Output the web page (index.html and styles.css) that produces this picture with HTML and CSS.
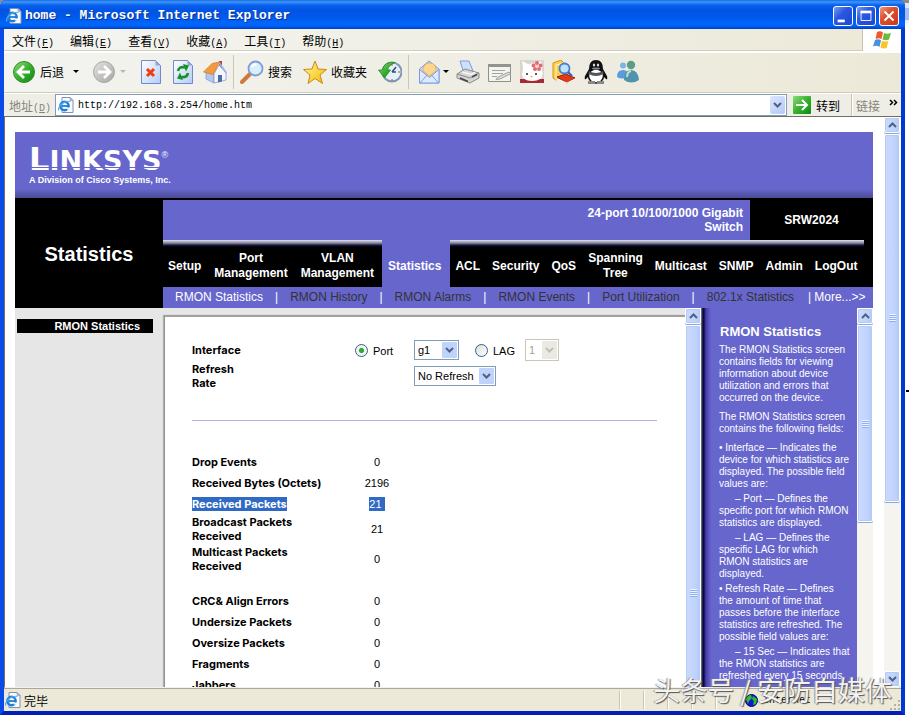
FILE: index.html
```html
<!DOCTYPE html>
<html lang="zh-CN">
<head>
<meta charset="utf-8">
<meta name="viewport" content="width=device-width, initial-scale=1">
<title>home - Microsoft Internet Explorer</title>
<link rel="stylesheet" href="styles.css">
</head>
<body>

<svg class="sprite" width="0" height="0" aria-hidden="true">
  <symbol id="ie" viewBox="0 0 16 16">
    <path d="M4 .5h8l3 3v12H4z" fill="#fdfdff" stroke="#7f8fb5"/>
    <path d="M12 .5v3h3z" fill="#b9c6e6" stroke="#7f8fb5" stroke-width=".6"/>
    <circle cx="6.5" cy="9" r="4.2" fill="none" stroke="#1c7fd8" stroke-width="2.4"/>
    <path d="M3.5 9h7" stroke="#1c7fd8" stroke-width="1.8"/>
    <path d="M8 10.4h4v2H9z" fill="#fdfdff"/>
    <path d="M1 13.500C-1 10 6 3 12.500 4.500" fill="none" stroke="#4fb0f2" stroke-width="1.200"/>
  </symbol>
  <symbol id="up" viewBox="0 0 9 6"><path d="M1 5l3.500-3.500L8 5" fill="none" stroke="#4d6185" stroke-width="2"/></symbol>
  <symbol id="down" viewBox="0 0 9 6"><path d="M1 1l3.500 3.500L8 1" fill="none" stroke="#4d6185" stroke-width="2"/></symbol>
  <linearGradient id="green" x1="0" y1="0" x2="1" y2="1"><stop offset="0" stop-color="#8fdc7c"/><stop offset=".5" stop-color="#38b02c"/><stop offset="1" stop-color="#0c8a10"/></linearGradient>
  <linearGradient id="grey" x1="0" y1="0" x2="1" y2="1"><stop offset="0" stop-color="#e4e4e2"/><stop offset="1" stop-color="#a4a4a2"/></linearGradient>
  <linearGradient id="paper" x1="0" y1="0" x2="1" y2="1"><stop offset="0" stop-color="#ffffff"/><stop offset="1" stop-color="#b4ccf6"/></linearGradient>
  <linearGradient id="gold" x1="0" y1="0" x2="1" y2="1"><stop offset="0" stop-color="#fff7a0"/><stop offset="1" stop-color="#f5b800"/></linearGradient>
</svg>

<div class="window">

  <header class="titlebar">
    <svg class="ie-icon" viewBox="0 0 16 16"><use href="#ie"/></svg>
    <h1>home - Microsoft Internet Explorer</h1>
    <button class="win-btn" aria-label="Minimize"><svg viewBox="0 0 20 20"><path d="M4 14h8v3H4z" fill="#fff"/></svg></button>
    <button class="win-btn" aria-label="Maximize"><svg viewBox="0 0 20 20"><path d="M4.500 5h11v10h-11z" fill="none" stroke="#fff"/><path d="M4 4h12v3H4z" fill="#fff"/></svg></button>
    <button class="win-btn close" aria-label="Close"><svg viewBox="0 0 20 20"><path d="M5 5l10 10M15 5L5 15" stroke="#fff" stroke-width="2.200"/></svg></button>
  </header>

  <nav class="menubar">
    <a href="#">文件<span>(<u>F</u>)</span></a>
    <a href="#">编辑<span>(<u>E</u>)</span></a>
    <a href="#">查看<span>(<u>V</u>)</span></a>
    <a href="#">收藏<span>(<u>A</u>)</span></a>
    <a href="#">工具<span>(<u>T</u>)</span></a>
    <a href="#">帮助<span>(<u>H</u>)</span></a>
    <div class="flag">
      <svg viewBox="0 0 20 18">
        <path d="M5 1q3-1.500 6 .5L9.500 8q-3-1.500-6 0z" fill="#ee5a2c"/>
        <path d="M12 2q3 1.500 7 0l-2 6.500q-3 1.500-6.500 0z" fill="#6dba3c"/>
        <path d="M3 9q3-1.500 6 .2L7.500 16q-3-2-6.500-.5z" fill="#4a8fe0"/>
        <path d="M10 9.700q3 1.300 6.500.2L14.500 17q-3 1-6-.5z" fill="#fcc428"/>
      </svg>
    </div>
  </nav>

  <div class="toolbar">
    <button class="tool has-text">
      <svg viewBox="0 0 24 24"><circle cx="12" cy="12" r="10.500" fill="url(#green)" stroke="#2f8a2a"/><path d="M12 6l-6 6 6 6M6.500 12H18" fill="none" stroke="#fff" stroke-width="2.800"/></svg>
      后退<i class="arrow"></i>
    </button>
    <button class="tool menu-tool" aria-label="Forward" disabled>
      <svg viewBox="0 0 24 24"><circle cx="12" cy="12" r="10.500" fill="url(#grey)" stroke="#a8a8a6"/><path d="M12 6l6 6-6 6M17.500 12H6" fill="none" stroke="#fff" stroke-width="2.800"/></svg><i class="arrow"></i>
    </button>
    <button class="tool" aria-label="Stop">
      <svg viewBox="0 0 24 24"><path d="M2.500.5h14l5 5v18h-19z" fill="url(#paper)" stroke="#6f8cc8"/><path d="M16.500.5v5h5z" fill="#8aa8e0"/><path d="M8 9l7 7M15 9l-7 7" stroke="#f03c10" stroke-width="3"/></svg>
    </button>
    <button class="tool" aria-label="Refresh">
      <svg viewBox="0 0 24 24"><path d="M2.500.5h14l5 5v18h-19z" fill="url(#paper)" stroke="#6f8cc8"/><path d="M16.500.5v5h5z" fill="#8aa8e0"/><path d="M7 11q1-5 7-3.500M17 13q-1 5-7 4" fill="none" stroke="#17922a" stroke-width="2.600"/><path d="M12 4l6 1.500-3 6zM12 20l-6-1.500 3-6z" fill="#17922a"/></svg>
    </button>
    <button class="tool" aria-label="Home">
      <svg viewBox="0 0 24 24"><path d="M16 1h3v7h-3z" fill="#c0402c"/><path d="M3 12l8 2v9l-8-4z" fill="#b4c8ee" stroke="#7890c8" stroke-width=".7"/><path d="M11 14l5-9 7 8v7l-12 3z" fill="#f3f6ff" stroke="#7890c8" stroke-width=".7"/><path d="M.5 12L9 3.500 16.500 2 10 14.500z" fill="#f59a3c" stroke="#d07820" stroke-width=".7"/><path d="M16 2.500l7.500 10.500" stroke="#9cb2e0" stroke-width="1.500"/><path d="M15 15h4v6.500l-4 1z" fill="#4a6cae"/></svg>
    </button>
    <span class="sep"></span>
    <button class="tool has-text">
      <svg viewBox="0 0 24 24"><path d="M10 14l-8 8" stroke="#cf7a3a" stroke-width="4" stroke-linecap="round"/><circle cx="15.500" cy="8.500" r="7" fill="#d8f0fd" stroke="#7f9cd8" stroke-width="1.800"/><path d="M11.500 7q2-3 5-2.500" fill="none" stroke="#fff" stroke-width="2"/></svg>
      搜索
    </button>
    <button class="tool has-text">
      <svg viewBox="0 0 24 24"><path d="M12 1l3 8 8.500.5-6.500 5.500 2.500 8.500L12 18.500 5 23.500l2-8.500L.5 9.500 9 9z" fill="url(#gold)" stroke="#c98a10"/></svg>
      收藏夹
    </button>
    <button class="tool" aria-label="History">
      <svg viewBox="0 0 24 24"><circle cx="14" cy="12" r="9.500" fill="#e3f1fc" stroke="#8296b0" stroke-width="2"/><path d="M14 12l4-5M14 12h4" stroke="#35506e" stroke-width="1.500"/><path d="M20 12h2M14 4v2M14 19v2" stroke="#d04020"/><path d="M17 2.500Q6 1 4.500 10H.5l6 8 6-8H9.500q1-5 7.500-7.500z" fill="url(#green)" stroke="#228c26" stroke-width=".8"/></svg>
    </button>
    <span class="sep"></span>
    <button class="tool mail" aria-label="Mail">
      <svg viewBox="0 0 24 24"><path d="M1.500 9L11 1l10 8v14h-19.500z" fill="#c4d8fa" stroke="#7b9ae0"/><path d="M5 11q0-8 7-8 6 0 6 8l-6.500 5z" fill="#fbd68c" stroke="#e0a050" stroke-width=".7"/><path d="M1.500 9.500l10 8 9.500-8V23H1.500z" fill="#dfeafd" stroke="#7b9ae0"/><path d="M2 23l7-8M20.500 23l-7-8" stroke="#7b9ae0"/></svg><i class="arrow"></i>
    </button>
    <button class="tool" aria-label="Print">
      <svg viewBox="0 0 24 24"><path d="M4 1h9l4 10-9 2z" fill="#cfe0fd" stroke="#7f9be0"/><path d="M1 14l8-5 14 4v5l-9 5-13-5z" fill="#d4d4d4" stroke="#8b8b8b"/><path d="M1 14l13 4 9-5" fill="none" stroke="#8b8b8b"/><path d="M4 18l8 3.500M16 17l5-2.500" stroke="#444" stroke-width="1.500"/><path d="M6 12l9 2.500 4-2" fill="none" stroke="#f6f6f6" stroke-width="1.500"/></svg>
    </button>
    <button class="tool" aria-label="Edit">
      <svg viewBox="0 0 24 24"><path d="M.5 4.500h22v17H.5z" fill="#f3f3ef" stroke="#8f8f8c"/><path d="M0 4h23v3H0z" fill="#94948f"/><path d="M4 10.500h13M4 13.500h11M4 16.500h5" stroke="#a5a5a0"/><path d="M10 17l11-5 2 1.500L12 19l-4 .5z" fill="#dcdcd8" stroke="#8f8f8c" stroke-width=".8"/></svg>
    </button>
    <button class="tool" aria-label="Hello Kitty">
      <svg viewBox="0 0 24 24"><path d="M0 0h24v23H0z" fill="#d8d6ce"/><path d="M0 19h24v4H0z" fill="#a52a36"/><path d="M3 8L2 1l6 3q4-1 8 0l5-3 1 9q3 11-10 11T3 10z" fill="#fff"/><circle cx="7" cy="14" r="1" fill="#222"/><circle cx="16" cy="14" r="1" fill="#222"/><ellipse cx="11.500" cy="16.500" rx="1.200" ry=".8" fill="#e8b020"/><g fill="#e46a72"><circle cx="17" cy="3" r="2"/><circle cx="20.500" cy="5.500" r="2"/><circle cx="19" cy="9" r="2"/><circle cx="15" cy="9" r="2"/><circle cx="13.500" cy="5.500" r="2"/></g><circle cx="17" cy="6.500" r="1.600" fill="#fbd0c0"/></svg>
    </button>
    <button class="tool" aria-label="Research">
      <svg viewBox="0 0 24 24"><path d="M1 3l8-3 3 3v14l-8 3-3-2z" fill="#fbd048" stroke="#d49410"/><path d="M4 5v15M4 5l8-2" stroke="#fff" stroke-width=".8"/><path d="M5 17l9-3 9 4-8 5z" fill="#e03a18" stroke="#9c1c08"/><path d="M5 19l10 4 8-4" fill="none" stroke="#fff"/><circle cx="12.500" cy="8.500" r="5" fill="#bfe2fd" stroke="#4a7ad8" stroke-width="1.800"/><path d="M16 12l4 4" stroke="#3a60b8" stroke-width="2.200"/></svg>
    </button>
    <button class="tool" aria-label="QQ">
      <svg viewBox="0 0 24 24"><path d="M5 9q0-9 7-9t7 9l4 7q1 4-1 3l-3-3H5l-3 3q-2 1-1-3z" fill="#111"/><ellipse cx="12" cy="16" rx="7.500" ry="7" fill="#fff" stroke="#111" stroke-width="1.500"/><path d="M5 11q7 4 14 0l.5 3q-7.500 4-15 0z" fill="#555"/><ellipse cx="10" cy="5" rx="1.200" ry="1.600" fill="#ddd"/><ellipse cx="14" cy="5" rx="1.200" ry="1.600" fill="#ddd"/><ellipse cx="12" cy="8.500" rx="4" ry="1" fill="#888"/><path d="M4 21h7v3H4zM13 21h7v3h-7z" fill="#888"/></svg>
    </button>
    <button class="tool" aria-label="Messenger">
      <svg viewBox="0 0 24 24"><circle cx="7" cy="5.500" r="3" fill="#7db4e8"/><path d="M1 17q0-7 6-7t5 7q-6 3-11 0z" fill="#5b9be0"/><circle cx="15" cy="5" r="4.200" fill="#5d9c86"/><path d="M8 20q0-10 7-10t8 10q-8 5-15 0z" fill="#4f93b0"/><path d="M11 17q0-5 4-6" fill="none" stroke="#bce6c0" stroke-width="2"/></svg>
    </button>
  </div>

  <div class="addressbar">
    <label for="url">地址<span>(<u>D</u>)</span></label>
    <div class="url-box">
      <svg class="ie-icon" viewBox="0 0 16 16"><use href="#ie"/></svg>
      <input type="text" id="url" value="http://192.168.3.254/home.htm">
      <button class="drop" aria-label="Open"><svg viewBox="0 0 9 6"><use href="#down"/></svg></button>
    </div>
    <button class="go">
      <svg viewBox="0 0 18 18"><rect width="18" height="18" rx="1" fill="url(#green)"/><path d="M3 9h10M9 4l5 5-5 5" fill="none" stroke="#fff" stroke-width="2"/></svg>
      转到
    </button>
    <button class="links">链接<svg viewBox="0 0 9 7"><path d="M1 1l2.500 2.500L1 6M5 1l2.500 2.500L5 6" fill="none" stroke="#000" stroke-width="1.500"/></svg></button>
  </div>

  <div class="viewport">
    <main class="page">
      <div class="brand">
        <div class="logo"><b>L</b>INKSYS<sup>®</sup></div>
        <div class="tagline">A Division of Cisco Systems, Inc.</div>
      </div>

      <div class="masthead">
        <h2 class="section">Statistics</h2>
        <div class="nav">
          <div class="product">
            <div class="product-name">24-port 10/100/1000 Gigabit<br>Switch</div>
            <div class="model">SRW2024</div>
          </div>
          <div class="tabs">
            <a href="#">Setup</a>
            <a href="#">Port<br>Management</a>
            <a href="#">VLAN<br>Management</a>
            <a href="#" class="active">Statistics</a>
            <a href="#">ACL</a>
            <a href="#">Security</a>
            <a href="#">QoS</a>
            <a href="#">Spanning<br>Tree</a>
            <a href="#">Multicast</a>
            <a href="#">SNMP</a>
            <a href="#">Admin</a>
            <a href="#">LogOut</a>
          </div>
          <div class="subtabs">
            <a href="#" class="active">RMON Statistics</a>
            <a href="#">RMON History</a>
            <a href="#">RMON Alarms</a>
            <a href="#">RMON Events</a>
            <a href="#">Port Utilization</a>
            <a href="#">802.1x Statistics</a>
            <a href="#" class="more">More...&gt;&gt;</a>
          </div>
        </div>
      </div>

      <div class="frames">
        <aside class="side"><h3>RMON Statistics</h3></aside>

        <section class="screen">
          <div class="sheet">
            <form class="filter">
              <span class="name">Interface</span>
              <span class="choice"><input type="radio" name="if" id="port" checked><label for="port">Port</label></span>
              <span class="choice">
                <select class="g" aria-label="Port"><option>g1</option></select>
                <input type="radio" name="if" id="lag"><label for="lag">LAG</label>
                <select class="n" aria-label="LAG" disabled><option>1</option></select>
              </span>
              <label class="name rate" for="rate">Refresh<br>Rate</label>
              <select class="r" id="rate"><option>No Refresh</option></select>
            </form>
            <hr>
            <table class="stats">
              <tr><th>Drop Events</th><td>0</td></tr>
              <tr><th>Received Bytes (Octets)</th><td>2196</td></tr>
              <tr class="selected"><th><span>Received Packets</span></th><td><span>21&nbsp;</span></td></tr>
              <tr class="tall"><th>Broadcast Packets<br>Received</th><td>21</td></tr>
              <tr class="tall"><th>Multicast Packets<br>Received</th><td>0</td></tr>
              <tr class="space"><td colspan="2"></td></tr>
              <tr><th>CRC&amp; Align Errors</th><td>0</td></tr>
              <tr><th>Undersize Packets</th><td>0</td></tr>
              <tr><th>Oversize Packets</th><td>0</td></tr>
              <tr><th>Fragments</th><td>0</td></tr>
              <tr><th>Jabbers</th><td>0</td></tr>
            </table>
          </div>
        </section>

        <div class="scroll cut">
          <button aria-label="Scroll up"><svg viewBox="0 0 9 6"><use href="#up"/></svg></button>
          <div class="thumb"><i></i></div>
        </div>

        <aside class="help">
          <h3>RMON Statistics</h3>
          <p>The RMON Statistics screen<br>contains fields for viewing<br>information about device<br>utilization and errors that<br>occurred on the device.</p>
          <p>The RMON Statistics screen<br>contains the following fields:</p>
          <p class="near">• Interface — Indicates the<br>device for which statistics are<br>displayed. The possible field<br>values are:</p>
          <p class="near sub">– Port — Defines the<br>specific port for which RMON<br>statistics are displayed.</p>
          <p class="near sub">– LAG — Defines the<br>specific LAG for which<br>RMON statistics are<br>displayed.</p>
          <p class="near">• Refresh Rate — Defines<br>the amount of time that<br>passes before the interface<br>statistics are refreshed. The<br>possible field values are:</p>
          <p class="near sub">– 15 Sec — Indicates that<br>the RMON statistics are<br>refreshed every 15 seconds.</p>
        </aside>

        <div class="scroll half">
          <button aria-label="Scroll up"><svg viewBox="0 0 9 6"><use href="#up"/></svg></button>
          <div class="thumb"><i></i></div>
        </div>
      </div>
    </main>

    <div class="scroll outer">
      <button aria-label="Scroll up"><svg viewBox="0 0 9 6"><use href="#up"/></svg></button>
      <div class="thumb"><i></i></div>
      <div class="track"></div>
      <button aria-label="Scroll down"><svg viewBox="0 0 9 6"><use href="#down"/></svg></button>
    </div>
  </div>

  <footer class="statusbar">
    <svg class="ie-icon" viewBox="0 0 16 16"><use href="#ie"/></svg>
    <span class="state">完毕</span>
    <span class="cell"></span><span class="cell"></span><span class="cell"></span><span class="cell"></span><span class="cell"></span>
    <span class="zone">
      <svg viewBox="0 0 13 13"><circle cx="6.500" cy="6.500" r="6" fill="#1414d8" stroke="#001060"/><path d="M1 5q2-4 5-4l1 3-3 3-1 3zM8 2l4 3-1 5-3 1 1-4-2-2z" fill="#28c428"/></svg>
      Internet
    </span>
    <svg class="grip" viewBox="0 0 12 12"><path d="M9 1h2v2H9zM9 5h2v2H9zM9 9h2v2H9zM5 5h2v2H5zM5 9h2v2H5zM1 9h2v2H1z" fill="#b5b19d"/></svg>
  </footer>
</div>

<div class="watermark">头条号 / 安防自媒体</div>

</body>
</html>
```
FILE: styles.css
```css
* {
  box-sizing: border-box;
}

body {
  margin: 0;
  height: 100vh;
  padding-right: 4px;
  overflow: hidden;
  position: relative;
  background:
    linear-gradient(#000, #000) right 390px / 3px 2px no-repeat,
    linear-gradient(#8c8c8c 0, #8c8c8c 3px, #dfe8fb 3px, #dfe8fb 8px, #a3bcf2 8px, #a3bcf2 20px, #dfe8fb 20px, #fff 26px);
  font-family: "Liberation Sans", "Noto Sans CJK SC", sans-serif;
  font-size: 12px;
}

button {
  border: none;
  background: none;
  padding: 0;
  font: inherit;
  color: inherit;
}

a {
  color: inherit;
  text-decoration: none;
}

.sprite {
  position: absolute;
}

.ie-icon {
  width: 16px;
  height: 16px;
  flex: none;
}

.window {
  height: 100%;
  display: flex;
  flex-direction: column;
  border: solid #0a3fe0;
  border-width: 0 4px 4px;
  border-color: #0a4be8 #0038d8 #0020b8 #0a4be8;
  background: #ece9d8;
  border-radius: 6px 6px 0 0;
}

/* title bar */
.titlebar {
  display: flex;
  align-items: center;
  gap: 3px;
  height: 29px;
  flex: none;
  margin: 0 -4px;
  padding: 2px 6px 0;
  border-radius: 6px 6px 0 0;
  background: linear-gradient(#1a6be0 0, #3c96fc 2px, #0a62ee 5px, #0054e3 10px, #0058ea 17px, #0066fc 23px, #0062f6 26px, #003cc4 29px);
  color: #fff;
}

.titlebar h1 {
  flex: 1;
  margin: 0;
  font: bold 13px "Liberation Mono", monospace;
  text-shadow: 1px 1px #0c2f8c;
}

.win-btn {
  width: 20px;
  height: 20px;
  border: 1px solid #fff;
  border-radius: 3px;
  background: linear-gradient(135deg, #7c9cf4, #2a58e0 40%, #1a46d4);
}

.win-btn svg {
  display: block;
  width: 18px;
  height: 18px;
}

.win-btn.close {
  background: linear-gradient(135deg, #f0987c, #e0502c 40%, #c8381a);
}

/* menu */
.menubar {
  display: flex;
  align-items: center;
  gap: 16px;
  height: 24px;
  flex: none;
  padding-left: 8px;
  background: linear-gradient(90deg, #f4f4f2, #ece9d8);
  border-bottom: 2px solid #fff;
  box-shadow: inset 0 -1px #d2cebc;
  font-family: "Noto Sans CJK SC", sans-serif;
}

.menubar span,
.addressbar label span {
  font: 10px "Liberation Mono", monospace;
}

.flag {
  margin-left: auto;
  width: 39px;
  height: 22px;
  display: flex;
  justify-content: center;
  align-items: center;
  background: #fff;
  border-left: 1px solid #c8c4b0;
}

.flag svg {
  width: 20px;
  height: 18px;
}

/* toolbar */
.toolbar {
  display: flex;
  align-items: center;
  gap: 8px;
  height: 40px;
  flex: none;
  padding: 0 8px 2px;
  background: linear-gradient(90deg, #f3f3f0, #ece9d8);
  border-bottom: 1px solid #d0ccb8;
}

.tool {
  display: flex;
  align-items: center;
  gap: 4px;
  flex: none;
  font-family: "Noto Sans CJK SC", sans-serif;
}

.tool svg {
  width: 24px;
  height: 24px;
}

.has-text {
  padding-right: 3px;
}

.arrow {
  border: 3px solid transparent;
  border-top-color: #000;
  border-bottom: none;
}

.has-text .arrow {
  margin: 0 2px 0 5px;
}

.menu-tool .arrow {
  margin-right: 5px;
  border-top-color: #b8b8b0;
}

.mail {
  gap: 1px;
  padding-left: 3px;
  margin-right: -1px;
}

.sep {
  width: 1px;
  height: 34px;
  margin: 0 -2px;
  background: #c9c6b4;
}

/* address */
.addressbar {
  display: flex;
  align-items: center;
  height: 23px;
  flex: none;
  padding-left: 5px;
  background: #efeee6;
  border-top: 1px solid #fff;
  font-family: "Noto Sans CJK SC", sans-serif;
}

.addressbar label {
  width: 46px;
  color: #85837a;
}

.url-box {
  flex: 1;
  display: flex;
  align-items: center;
  height: 22px;
  padding: 0 1px 0 2px;
  background: #fff;
  border: 1px solid #7f9db9;
}

.url-box input {
  flex: 1;
  border: none;
  outline: none;
  padding: 0 4px;
  background: none;
  font: 10px "Liberation Mono", monospace;
}

.drop {
  width: 15px;
  height: 18px;
  border-radius: 2px;
  background: linear-gradient(135deg, #dce6fe, #b4c9f7);
}

.drop svg,
.scroll button svg {
  width: 9px;
  height: 6px;
  display: block;
  margin: auto;
}

.go {
  display: flex;
  align-items: center;
  gap: 5px;
  padding: 0 11px 0 6px;
}

.go svg {
  width: 18px;
  height: 18px;
}

.links {
  display: flex;
  gap: 9px;
  height: 22px;
  padding: 0 3px 0 4px;
  align-items: center;
  border-left: 1px solid #c8c4b0;
  box-shadow: inset 1px 0 #fff;
  color: #85837a;
}

.links svg {
  width: 9px;
  height: 7px;
  margin-bottom: 6px;
}

/* page */
.viewport {
  flex: 1;
  min-height: 0;
  display: flex;
  background: #fff;
  border-top: 1px solid #716f64;
  border-left: 1px solid #716f64;
  border-bottom: 1px solid #f4f2e8;
}

.page {
  flex: 1;
  min-width: 0;
  display: flex;
  flex-direction: column;
  padding: 15px 10px 0;
}

.brand {
  height: 66px;
  flex: none;
  padding: 12px 14px 0;
  background: linear-gradient(#66c 0, #66c 57px, #4a4a94 66px);
  color: #fff;
}

.logo {
  position: relative;
  width: max-content;
  height: 30px;
  font: bold 27px/30px "DejaVu Sans", sans-serif;
}

.logo b {
  font-size: 32px;
}

.logo::after {
  content: "";
  position: absolute;
  left: 0;
  right: 8px;
  top: 23px;
  height: 1px;
  background: #66c;
}

.logo sup {
  font: 9px "Liberation Sans", sans-serif;
  vertical-align: 12px;
}

.tagline {
  font: bold 9px/13px "Liberation Sans", sans-serif;
}

.masthead {
  display: flex;
  flex: none;
  height: 110px;
  background: #000;
  color: #fff;
}

.section {
  width: 148px;
  margin: 0;
  font-size: 20px;
  line-height: 112px;
  text-align: center;
}

.nav {
  flex: 1;
  display: flex;
  flex-direction: column;
  padding-top: 2px;
}

.product {
  display: flex;
  height: 40px;
  font-weight: bold;
  line-height: 14px;
}

.product-name {
  flex: 1;
  padding: 6px 7px;
  background: #66c;
  text-align: right;
}

.model {
  width: 123px;
  padding-top: 13px;
  text-align: center;
}

.tabs {
  display: flex;
  height: 47px;
  background: linear-gradient(#e0e0f0 0, #a8a8b8 2px, #606078 4px, #181848 5px, #000 7px) no-repeat;
  background-size: calc(100% - 9px) 100%;
  font-weight: bold;
  line-height: 15px;
  text-align: center;
}

.tabs a {
  display: flex;
  align-items: center;
  padding: 5px 8px 0 5px;
}

.tabs .active {
  padding: 5px 9px 0 6px;
  background: #66c;
}

.tabs .active ~ a {
  padding-right: 7px;
}

.subtabs {
  display: flex;
  height: 21px;
  padding-left: 12px;
  background: #66c;
  color: #333;
  line-height: 21px;
}

.subtabs a::after {
  content: "|";
  padding: 0 12px;
  color: #fff;
}

.subtabs a:nth-child(6)::after {
  padding: 0 3px 0 14px;
}

.subtabs .active,
.subtabs .more {
  color: #fff;
}

.subtabs .more::after {
  content: none;
}

.frames {
  flex: 1;
  min-height: 0;
  display: flex;
  overflow: hidden;
}

.side {
  width: 148px;
  flex: none;
  padding: 11px 10px 0 2px;
  background: #e6e6e6;
}

.side h3 {
  margin: 0;
  padding-right: 13px;
  background: #000;
  color: #fff;
  font-size: 11px;
  line-height: 14px;
  text-align: right;
}

.screen {
  flex: 1;
  min-width: 0;
  padding: 7px 0 0 1px;
  background: #e6e6e6;
}

.sheet {
  height: 100%;
  padding: 20px 28px 0 27px;
  background: #fff;
  border-top: 2px solid #a0a0a0;
  border-left: 1px solid #909090;
  box-shadow: -1px 0 1px #b0b0b0;
}

.filter {
  display: grid;
  grid-template-columns: 163px 59px 1fr;
  grid-auto-rows: 26px;
  align-items: center;
  font-size: 11px;
}

.name,
.stats th {
  font: bold 11px/14px Inter, "Liberation Sans", sans-serif;
}

.rate {
  grid-column: span 2;
}

.choice {
  display: flex;
  align-items: center;
}

.choice label {
  padding-top: 2px;
}

input[type="radio"] {
  appearance: none;
  width: 13px;
  height: 13px;
  margin: 0 5px 0 0;
  border: 1px solid #31618c;
  border-radius: 50%;
  background: linear-gradient(135deg, #dcdcd7, #fff);
}

input[type="radio"]:checked {
  background: radial-gradient(#3cb83a 0, #21a121 2px, #f4f4f0 3px);
}

.choice select + input {
  margin-left: 16px;
}

select {
  appearance: none;
  height: 20px;
  padding: 0 3px;
  border: 1px solid #7f9db9;
  border-radius: 0;
  color: #000;
  background: #fff url("data:image/svg+xml,%3Csvg xmlns='http://www.w3.org/2000/svg' width='15' height='16'%3E%3Crect width='15' height='16' rx='1' fill='%23c1d2fb'/%3E%3Cpath d='M4 6l3.500 3.500L11 6' fill='none' stroke='%234d6185' stroke-width='2'/%3E%3C/svg%3E") right 1px center no-repeat;
  font: 11px "Liberation Sans", sans-serif;
}

.g {
  width: 45px;
}

.n {
  width: 34px;
  height: 22px;
  margin-left: 10px;
}

.r {
  width: 82px;
}

select:disabled {
  border-color: #c9c7ba;
  color: #a1a192;
  opacity: 1;
  background-image: url("data:image/svg+xml,%3Csvg xmlns='http://www.w3.org/2000/svg' width='15' height='18'%3E%3Crect width='15' height='18' rx='1' fill='%23ebeae2'/%3E%3Cpath d='M4 7l3.500 3.500L11 7' fill='none' stroke='%23c0beb0' stroke-width='2'/%3E%3C/svg%3E");
}

hr {
  height: 1px;
  margin: 31px 0 30px;
  border: none;
  background: #b3b3e6;
}

.stats {
  border-collapse: collapse;
  font-size: 11px;
}

.stats tr {
  height: 21px;
}

.stats .tall {
  height: 30px;
}

.stats .space {
  height: 16px;
}

.stats th {
  width: 160px;
  padding: 0;
  text-align: left;
}

.stats td {
  width: 50px;
  padding: 0;
  text-align: center;
}

.selected span {
  display: inline-block;
  line-height: 14px;
  background: #316ac5;
  color: #fff;
}

.help {
  width: 156px;
  flex: none;
  padding: 15px 0 0 18px;
  overflow: hidden;
  background: linear-gradient(90deg, #888 0, #000040 2px, #101048 3px, #4a3cb0 5px, #66c 10px);
  color: #fff;
  font-size: 10px;
  line-height: 12px;
  white-space: nowrap;
}

.help h3 {
  margin: 0 0 3px 1px;
  font-size: 13px;
  line-height: 18px;
}

.help p {
  margin: 0 0 7px;
}

.help .near {
  margin-bottom: 3px;
}

.help .sub {
  text-indent: 16px;
}

/* scrollbars */
.scroll {
  width: 16px;
  flex: none;
  display: flex;
  flex-direction: column;
  background: #f5f4ee;
  overflow: hidden;
}

.scroll button,
.thumb {
  border: 1px solid #fff;
  border-radius: 2px;
  background: linear-gradient(90deg, #cbdafd, #c2d4fd 60%, #b2cbf8);
  box-shadow: inset 0 0 0 1px #b6caf5, 0 1px #8aa8d8;
}

.scroll button {
  height: 16px;
  flex: none;
}

.thumb {
  display: flex;
  align-items: center;
  justify-content: center;
  margin-top: 1px;
}

.thumb i {
  width: 7px;
  height: 8px;
  background: repeating-linear-gradient(#eef4fe 0, #eef4fe 1px, #8cb0f8 1px, #8cb0f8 2px);
}

.cut .thumb {
  flex: none;
  height: 535px;
}

.half .thumb {
  height: 52%;
}

.outer {
  margin: 0 1px;
}

.outer .thumb {
  flex: 367;
}

.track {
  flex: 170;
}

/* status bar */
.statusbar {
  display: flex;
  align-items: center;
  height: 23px;
  flex: none;
  padding-left: 1px;
  border-top: 1px solid #aca899;
  font-family: "Noto Sans CJK SC", sans-serif;
}

.state {
  flex: 1;
  padding-left: 3px;
}

.cell {
  width: 24px;
  height: 18px;
  border-left: 1px solid #c9c5b2;
  box-shadow: inset 1px 0 #fff;
}

.zone {
  display: flex;
  align-items: center;
  gap: 5px;
  width: 150px;
  padding-left: 6px;
  font: 10px "Liberation Mono", monospace;
}

.zone svg {
  width: 13px;
  height: 13px;
}

.grip {
  width: 12px;
  height: 12px;
  align-self: flex-end;
}

.watermark {
  position: absolute;
  right: 17px;
  bottom: 7px;
  font: 27px/36px "Noto Sans CJK SC", sans-serif;
  color: #f2f2f2;
  text-shadow: 1px 1px 1px #555, -1px 0 1px #999;
  white-space: nowrap;
}
```
